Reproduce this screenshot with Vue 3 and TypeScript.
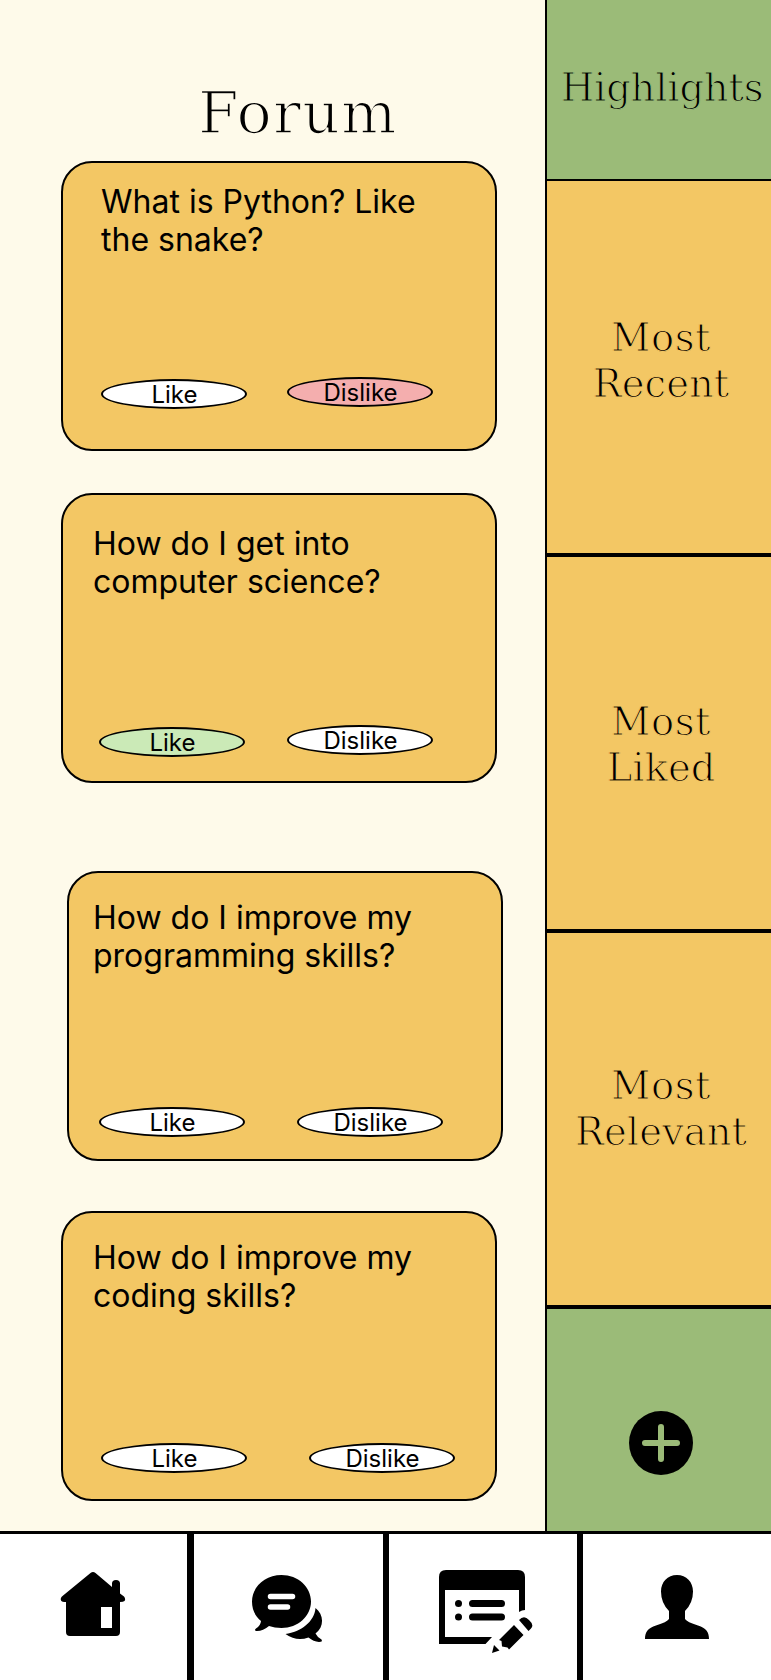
<script setup lang="ts">
interface Post {
  id: string
  lines: string[]
  vote?: 'liked' | 'disliked'
}

const posts: Post[] = [
  { id: 'python', lines: ['What is Python? Like', 'the snake?'], vote: 'disliked' },
  { id: 'science', lines: ['How do I get into', 'computer science?'], vote: 'liked' },
  { id: 'programming', lines: ['How do I improve my', 'programming skills?'] },
  { id: 'coding', lines: ['How do I improve my', 'coding skills?'] },
]

const filters: { id: string; lines: string[] }[] = [
  { id: 'recent', lines: ['Most', 'Recent'] },
  { id: 'most-liked', lines: ['Most', 'Liked'] },
  { id: 'relevant', lines: ['Most', 'Relevant'] },
]
</script>

<template>
  <div class="screen">
    <div class="content">
      <main class="feed">
        <h1 class="title">Forum</h1>
        <article v-for="post in posts" :key="post.id" class="card" :class="`card-${post.id}`">
          <p class="question">
            <span v-for="line in post.lines" :key="line" class="line">{{ line }}</span>
          </p>
          <div class="votes">
            <button class="vote like" :class="{ liked: post.vote === 'liked' }">Like</button>
            <button class="vote dislike" :class="{ disliked: post.vote === 'disliked' }">Dislike</button>
          </div>
        </article>
      </main>

      <aside class="sidebar">
        <h2 class="highlights">Highlights</h2>
        <div v-for="f in filters" :key="f.id" class="filter" :class="f.id">
          <span v-for="line in f.lines" :key="line" class="line">{{ line }}</span>
        </div>
        <div class="add">
          <svg width="64" height="64" viewBox="0 0 64 64">
            <circle cx="32" cy="32" r="32" />
            <path class="plus" d="M32 16v32M16 32h32" />
          </svg>
        </div>
      </aside>
    </div>

    <nav class="tabs">
      <a class="tab home">
        <svg width="187" height="146" viewBox="0 0 187 146">
          <path
            fill-rule="evenodd"
            d="M90.500 39Q93 37 95.500 39L112 53V49.500Q112 46 116 46T120 49.500V59.500L124 62.500Q126 65 124.500 67Q123.500 68 120 68V98Q120 102 116 102H70Q66 102 66 98V68Q62 68 61 66.500Q60 64 62.500 62Z M101 73V94H112V73Z"
          />
        </svg>
      </a>
      <a class="tab chat">
        <svg width="189" height="146" viewBox="0 0 189 146">
          <path
            d="M87.500 41C104 41 117 53 117 67.500S104 94 87.500 94Q80.500 94 75 92Q68.500 97.500 62 97Q60 96 62 94.500Q66.500 92 67 87C61 82.500 58 75 58 67.500C58 53 71 41 87.500 41Z"
          />
          <path
            d="M121.500 74C130 80.500 130.500 93 121.500 99.500Q123.500 103.500 127.500 105.500Q129 108 125 108Q119.500 107.500 114.500 103.500Q102.500 108 91.500 100C107 98 120.500 87.500 121.500 74Z"
          />
          <path class="cut" d="M76.500 62.500h22M76.500 73h17" />
        </svg>
      </a>
      <a class="tab notes">
        <svg width="188" height="146" viewBox="0 0 188 146">
          <path
            fill-rule="evenodd"
            d="M50 110V43Q50 36 57 36H129Q136 36 136 43V76Q133 76 130 78V56H56V103H103L96.500 110Z"
          />
          <circle cx="69.500" cy="69.500" r="3.500" />
          <circle cx="69.500" cy="83" r="3.500" />
          <path class="rule" d="M83.500 69.500h29M83.500 83h29" />
          <path
            d="M125 91L134.500 101L120 115.500L118.500 113.500L113 112.500L112.500 107L110 106Z M130 86Q135 80.500 140 86Q145.500 91 142 94.500L139.500 97Z M105 111L110.500 116.500L103 119Z"
          />
        </svg>
      </a>
      <a class="tab profile">
        <svg width="188" height="146" viewBox="0 0 188 146">
          <path
            d="M94 41C103.500 41 110 48 110 57.500Q110 69 102 77V85Q104 88 115 91.500C123 94 126 98 126 105H62C62 98 65 94 73 91.500Q84 88 86 85V77Q78 69 78 57.500C78 48 84.500 41 94 41Z"
          />
        </svg>
      </a>
    </nav>
  </div>
</template>

<style>
body {
  margin: 0;
}
</style>

<style scoped>
.screen {
  width: 771px;
  height: 1680px;
  display: flex;
  flex-direction: column;
  overflow: hidden;
  background: #fefaea;
  color: #000;
  font-family: Inter, 'Liberation Sans', sans-serif;
}

.content {
  height: 1531px;
  display: flex;
}

.feed {
  width: 545px;
  box-sizing: border-box;
  padding-left: 61px;
  display: flex;
  flex-direction: column;
}

/* Slab headings are slimmed by a stroke in the surface colour. */
.title {
  height: 81px;
  margin: 80px 0 0 137px;
  font: 400 58.5px/66px 'DejaVu Serif', serif;
  letter-spacing: 1.2px;
  -webkit-text-stroke: 1.7px #fefaea;
}

.card {
  width: 436px;
  height: 290px;
  flex: none;
  box-sizing: border-box;
  border: 2px solid #000;
  border-radius: 31px;
  background: #f3c764;
}

.card-python { padding: 20px 0 0 38px; }
.card-science { margin-top: 42px; padding: 30px 0 0 30px; }
.card-programming { margin: 88px 0 0 6px; padding: 26px 0 0 24px; }
.card-coding { margin-top: 50px; padding: 26px 0 0 30px; }

.question {
  height: 75px;
  margin: 0;
  font-size: 32px;
  line-height: 38px;
  white-space: nowrap;
}

.line {
  display: block;
}

.votes {
  display: flex;
  align-items: flex-start;
}

.card-python .votes { padding-top: 119px; gap: 40px; }
.card-science .votes { padding: 125px 0 0 6px; gap: 42px; }
.card-programming .votes { padding: 133px 0 0 6px; gap: 52px; }
.card-coding .votes { padding: 129px 0 0 8px; gap: 62px; }
.card-python .like,
.card-science .like { margin-top: 2px; }

.vote {
  width: 146px;
  height: 30px;
  padding: 1px 0 0 1px;
  border: 2px solid #000;
  border-radius: 50%;
  background: #fff;
  color: #000;
  font: 400 24px/26px Inter, 'Liberation Sans', sans-serif;
}

.liked { background: #cbeab7; }
.disliked { background: #f4aeae; }

.sidebar {
  width: 226px;
  box-sizing: border-box;
  border-left: 2px solid #000;
  display: flex;
  flex-direction: column;
  background: #9bbb78;
  text-align: center;
  font: 400 38.5px/46px 'DejaVu Serif', serif;
}

.highlights {
  height: 179px;
  box-sizing: border-box;
  margin: 0;
  padding: 65px 0 0 6px;
  font: inherit;
  letter-spacing: -0.2px;
  -webkit-text-stroke: 1.15px #9bbb78;
}

.filter {
  height: 376px;
  box-sizing: border-box;
  padding-left: 4px;
  border-top: 4px solid #000;
  background: #f3c764;
  -webkit-text-stroke: 1.15px #f3c764;
}

.filter .line:first-child { letter-spacing: 0.6px; }

.recent { height: 374px; border-top-width: 2px; padding-top: 134px; }
.most-liked { padding-top: 142px; }
.relevant { padding-top: 130px; }

.add {
  flex: 1;
  border-top: 4px solid #000;
  padding: 102px 0 0 4px;
}

.add svg,
.tab svg {
  display: block;
}

.add svg {
  margin: 0 auto;
}

.plus,
.cut,
.rule {
  fill: none;
  stroke-linecap: round;
}

.plus { stroke: #9bbb78; stroke-width: 6px; }
.cut { stroke: #fff; stroke-width: 5.5px; }
.rule { stroke: #000; stroke-width: 7px; }

.tabs {
  height: 149px;
  box-sizing: border-box;
  border-top: 3px solid #000;
  display: flex;
  background: #fff;
}

.tab { flex: none; }
.home { border-right: 7px solid #000; }
.chat,
.notes { border-right: 6px solid #000; }
</style>
